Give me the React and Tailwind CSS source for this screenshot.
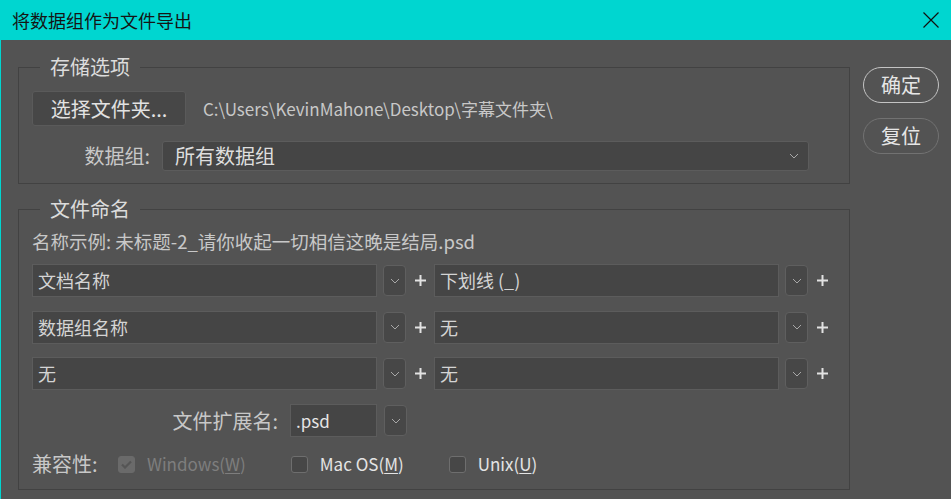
import { useState } from 'react';

const font = "font-['Noto_Sans_CJK_SC',sans-serif]";

const Chevron = ({ className = '' }) => (
    <svg width="10" height="6" viewBox="0 0 10 6" className={className}>
        <path d="M1 1 L5 5 L9 1" fill="none" stroke="#a8a8a8" strokeWidth="1" />
    </svg>
);

const Plus = () => (
    <svg width="11" height="11" viewBox="0 0 11 11">
        <path d="M5.5 0 V11 M0 5.5 H11" stroke="#e2e2e2" strokeWidth="2" />
    </svg>
);

const DropButton = () => (
    <div className="flex h-[31px] w-[23px] shrink-0 items-center justify-center rounded-[4px] border border-[#5f5f5f] bg-[#474747]">
        <Chevron />
    </div>
);

const Field = ({ value, className = '' }) => (
    <div className={`flex h-[33px] items-center border border-[#5c5c5c] bg-[#454545] px-[5px] text-[18px] text-[#d4d4d4] ${className}`}>
        {value}
    </div>
);

const Checkbox = ({ checked, disabled, label, underline }) => (
    <label className="flex items-center">
        <span
            className={`flex h-[17px] w-[17px] items-center justify-center rounded-[3px] border ${
                disabled ? 'border-[#6a6a6a] bg-[#6a6a6a]' : 'border-[#6e6e6e] bg-[#474747]'
            }`}
        >
            {checked && (
                <svg width="11" height="9" viewBox="0 0 11 9">
                    <path d="M1 4.5 L4 7.5 L10 1.5" fill="none" stroke="#555555" strokeWidth="2.2" />
                </svg>
            )}
        </span>
        <span className={`ml-[12px] text-[17px] ${disabled ? 'text-[#7e7e7e]' : 'text-[#e4e4e4]'}`}>
            {label}(<span className="underline underline-offset-2">{underline}</span>)
        </span>
    </label>
);

const rows = [
    ['文档名称', '下划线 (_)'],
    ['数据组名称', '无'],
    ['无', '无'],
];

const App = () => {
    const [rowsState] = useState(rows);

    return (
        <div className={`h-[499px] w-[951px] overflow-hidden border-l border-[#00d6d0] bg-[#535353] ${font}`}>
            {/* title bar */}
            <div className="flex h-[40px] items-center justify-between bg-[#00d6d0] pl-[11px] pr-[12px]">
                <span className="text-[18px] text-[#151515]">将数据组作为文件导出</span>
                <svg width="16" height="16" viewBox="0 0 16 16">
                    <path d="M0.5 0.5 L15.5 15.5 M15.5 0.5 L0.5 15.5" stroke="#111" strokeWidth="1.2" />
                </svg>
            </div>

            <div className="flex pl-[17px] pt-[15px]">
                <div className="w-[832px]">
                    {/* storage options */}
                    <fieldset className="border border-[#424242] px-[13px] pb-[12px]">
                        <legend className="ml-[8px] px-[10px] text-[20px] leading-[24px] text-[#dcdcdc]">存储选项</legend>
                        <div className="mt-[12px] flex items-center">
                            <button className="flex h-[35px] w-[154px] items-center justify-center rounded-[3px] border border-[#5a5a5a] bg-[#474747] text-[20px] text-[#e2e2e2]">
                                选择文件夹...
                            </button>
                            <span className="ml-[17px] text-[17px] text-[#c8c8c8]">C:\Users\KevinMahone\Desktop\字幕文件夹\</span>
                        </div>
                        <div className="mt-[15px] flex items-center">
                            <span className="w-[118px] text-right text-[20px] text-[#c8c8c8]">数据组:</span>
                            <div className="ml-[12px] flex h-[30px] w-[647px] items-center justify-between rounded-[3px] border border-[#5c5c5c] bg-[#454545] pl-[12px] pr-[9px]">
                                <span className="text-[20px] text-[#dedede]">所有数据组</span>
                                <Chevron />
                            </div>
                        </div>
                    </fieldset>

                    {/* file naming */}
                    <fieldset className="mt-[13px] border border-[#424242] px-[13px] pb-[13px]">
                        <legend className="ml-[8px] px-[10px] text-[20px] leading-[24px] text-[#dcdcdc]">文件命名</legend>
                        <div className="mt-[9px] text-[18.5px] leading-[22px] text-[#c8c8c8]">
                            名称示例: 未标题-2_请你收起一切相信这晚是结局.psd
                        </div>
                        <div className="mt-[12px] flex flex-col gap-[13.5px]">
                            {rowsState.map(([a, b], i) => (
                                <div key={i} className="flex items-center">
                                    <Field value={a} className="w-[345px]" />
                                    <div className="ml-[6px]"><DropButton /></div>
                                    <div className="flex w-[28px] justify-center"><Plus /></div>
                                    <Field value={b} className="w-[345px]" />
                                    <div className="ml-[6px]"><DropButton /></div>
                                    <div className="flex w-[28px] justify-center"><Plus /></div>
                                </div>
                            ))}
                        </div>
                        <div className="mt-[14px] flex items-center">
                            <span className="w-[246px] text-right text-[20px] text-[#c8c8c8]">文件扩展名:</span>
                            <Field value=".psd" className="ml-[12px] h-[32px] w-[87px] !text-[17px] !text-[#e6e6e6]" />
                            <div className="ml-[7px]"><DropButton /></div>
                        </div>
                        <div className="mt-[15px] flex h-[24px] items-center">
                            <span className="w-[86px] text-[20px] text-[#c8c8c8]">兼容性:</span>
                            <Checkbox checked disabled label="Windows" underline="W" />
                            <div className="ml-[45px]"><Checkbox label="Mac OS" underline="M" /></div>
                            <div className="ml-[45px]"><Checkbox label="Unix" underline="U" /></div>
                        </div>
                    </fieldset>
                </div>

                {/* side buttons */}
                <div className="ml-[13px] mt-[12px] flex flex-col gap-[15px]">
                    <button className="h-[36px] w-[76px] rounded-full border-[1.5px] border-[#c4c4c4] text-[20px] text-[#e6e6e6]">确定</button>
                    <button className="h-[36px] w-[76px] rounded-full border-[1.5px] border-[#727272] text-[20px] text-[#e6e6e6]">复位</button>
                </div>
            </div>
        </div>
    );
};

export default App;
